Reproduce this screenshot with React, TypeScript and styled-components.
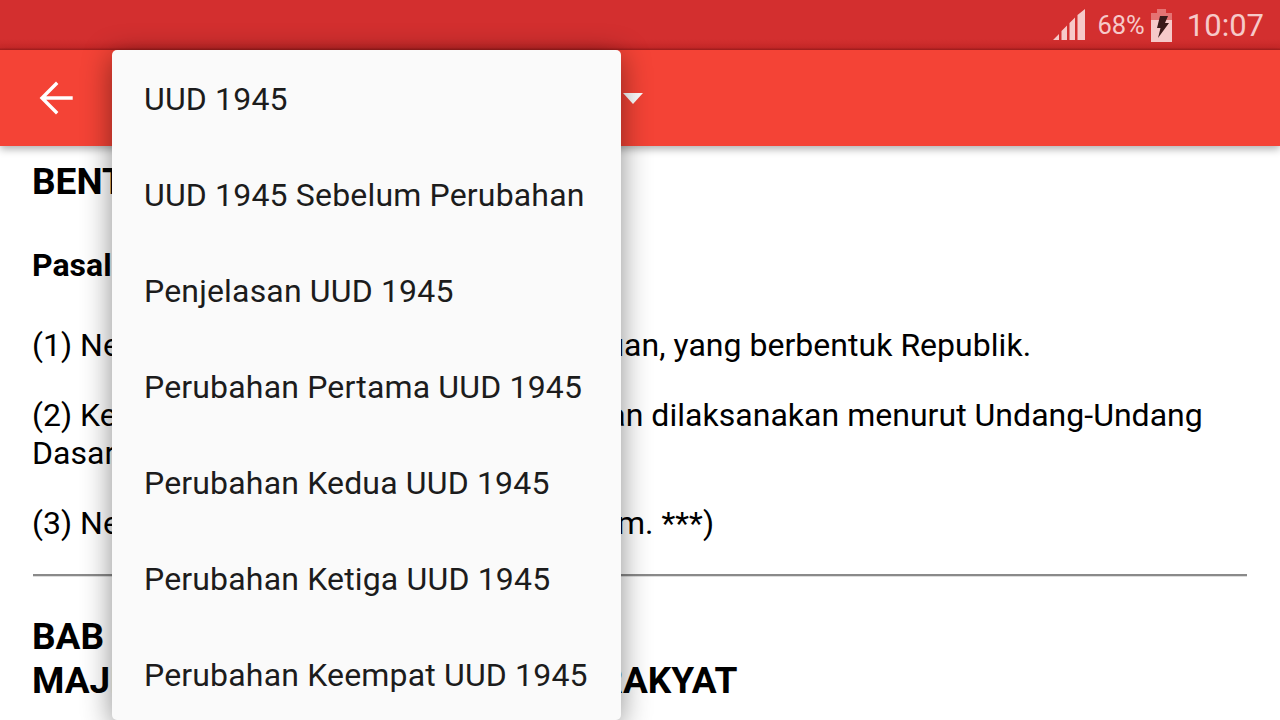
import React from "react";
import styled, { createGlobalStyle } from "styled-components";

const Global = createGlobalStyle`
  html, body { margin: 0; padding: 0; background: #fff; }
  body { font-family: Roboto, "Liberation Sans", sans-serif; }
`;
const Screen = styled.div`
  position: relative; width: 1280px; height: 720px; overflow: hidden; background: #fff; color: #000;
`;
const StatusBar = styled.div`
  height: 50px; background: linear-gradient(#d32f2f 78%, #c62828 96%, #ad1f1f 98%);
  display: flex; align-items: center; justify-content: flex-end;
  padding-right: 16px; color: #f6c9c9; box-sizing: border-box;
`;
const Percent = styled.span` font-size: 25.5px; margin: 0 6px 0 11px; `;
const Clock = styled.span` font-size: 31px; margin-left: 15px; `;
const Toolbar = styled.div`
  height: 96px; background: #f44336; display: flex; align-items: center; position: relative; z-index: 1;
  box-shadow: 0 3px 8px rgba(0,0,0,.32);
`;
const Back = styled.svg` width: 34px; height: 34px; margin-left: 39px; `;
const Caret = styled.div`
  width: 0; height: 0; border-left: 10px solid transparent; border-right: 10px solid transparent;
  border-top: 11px solid #fff; margin-left: 550px;
`;
const Content = styled.div` padding: 14px 32px 0; `;
const H = styled.h2` margin: 0; font-size: 37px; line-height: 44px; font-weight: 700; `;
const Sub = styled.h3` margin: 42px 0 0; font-size: 32px; line-height: 38px; font-weight: 700; `;
const P = styled.p` margin: 42px 0 0; font-size: 32px; line-height: 38px; letter-spacing: .025px; & + & { margin-top: 32px; } `;
const Rule = styled.hr` margin: 32px 1px 0 1px; border: 0; border-top: 2px solid #8a8a8a; border-bottom: 1px solid #ddd; height: 0; `;
const H2 = styled(H)` margin-top: 38px; word-spacing: 14.5px; `;
const Menu = styled.ul`
  position: absolute; z-index: 2; left: 112px; top: 50px; width: 509px; height: 670px; margin: 0; padding: 1px 0 0;
  box-sizing: border-box; list-style: none; background: #fafafa; border-radius: 5px; overflow: hidden;
  box-shadow: 0 6px 30px rgba(0,0,0,.45);
`;
const Item = styled.li`
  height: 96px; display: flex; align-items: center; padding-left: 32px; font-size: 32px; letter-spacing: .17px; color: #1c1c1c; white-space: nowrap;
`;

const items = ["UUD 1945","UUD 1945 Sebelum Perubahan","Penjelasan UUD 1945","Perubahan Pertama UUD 1945","Perubahan Kedua UUD 1945","Perubahan Ketiga UUD 1945","Perubahan Keempat UUD 1945"];

export default function App() {
  return (
    <Screen>
      <Global />
      <StatusBar>
        <svg width="33" height="32" viewBox="0 0 33 32">
          <path fill="#f6c9c9" d="M0 31 L6 25 V31 Z M8.5 31 V22 L14 16.5 V31 Z M16.5 31 V14 L22 8.5 V31 Z M24.5 31 V6 L32 0 V31 Z" />
        </svg>
        <Percent>68%</Percent>
        <svg width="21" height="33" viewBox="0 0 21 33">
          <path fill="#e57373" d="M6 0 H15 V4 H21 V11 H0 V4 H6 Z" />
          <path fill="#f6c9c9" d="M0 11 H21 V33 H0 Z" />
          <path fill="#3a1a1a" d="M9 7 H17 L14 14 H18 L7 29 L9.500 19 H6 Z" />
        </svg>
        <Clock>10:07</Clock>
      </StatusBar>
      <Toolbar>
        <Back viewBox="0 0 34 34" fill="none" stroke="#fff" strokeWidth="3.4" strokeLinecap="square">
          <path d="M32 17 H4 M17 3 L3 17 L17 31" />
        </Back>
        <Caret />
      </Toolbar>
      <Content>
        <H>BENTUK DAN KEDAULATAN</H>
        <Sub>Pasal 1</Sub>
        <P>(1) Negara Indonesia ialah Negara Kesatuan, yang berbentuk Republik.</P>
        <P>(2) Kedaulatan berada di tangan rakyat dan dilaksanakan menurut Undang-Undang Dasar. ***)</P>
        <P>(3) Negara Indonesia adalah negara hukum. ***)</P>
        <Rule />
        <H2>BAB II<br />MAJELIS PERMUSYAWARATAN RAKYAT</H2>
      </Content>
      <Menu>
        {items.map((t) => <Item key={t}>{t}</Item>)}
      </Menu>
    </Screen>
  );
}
